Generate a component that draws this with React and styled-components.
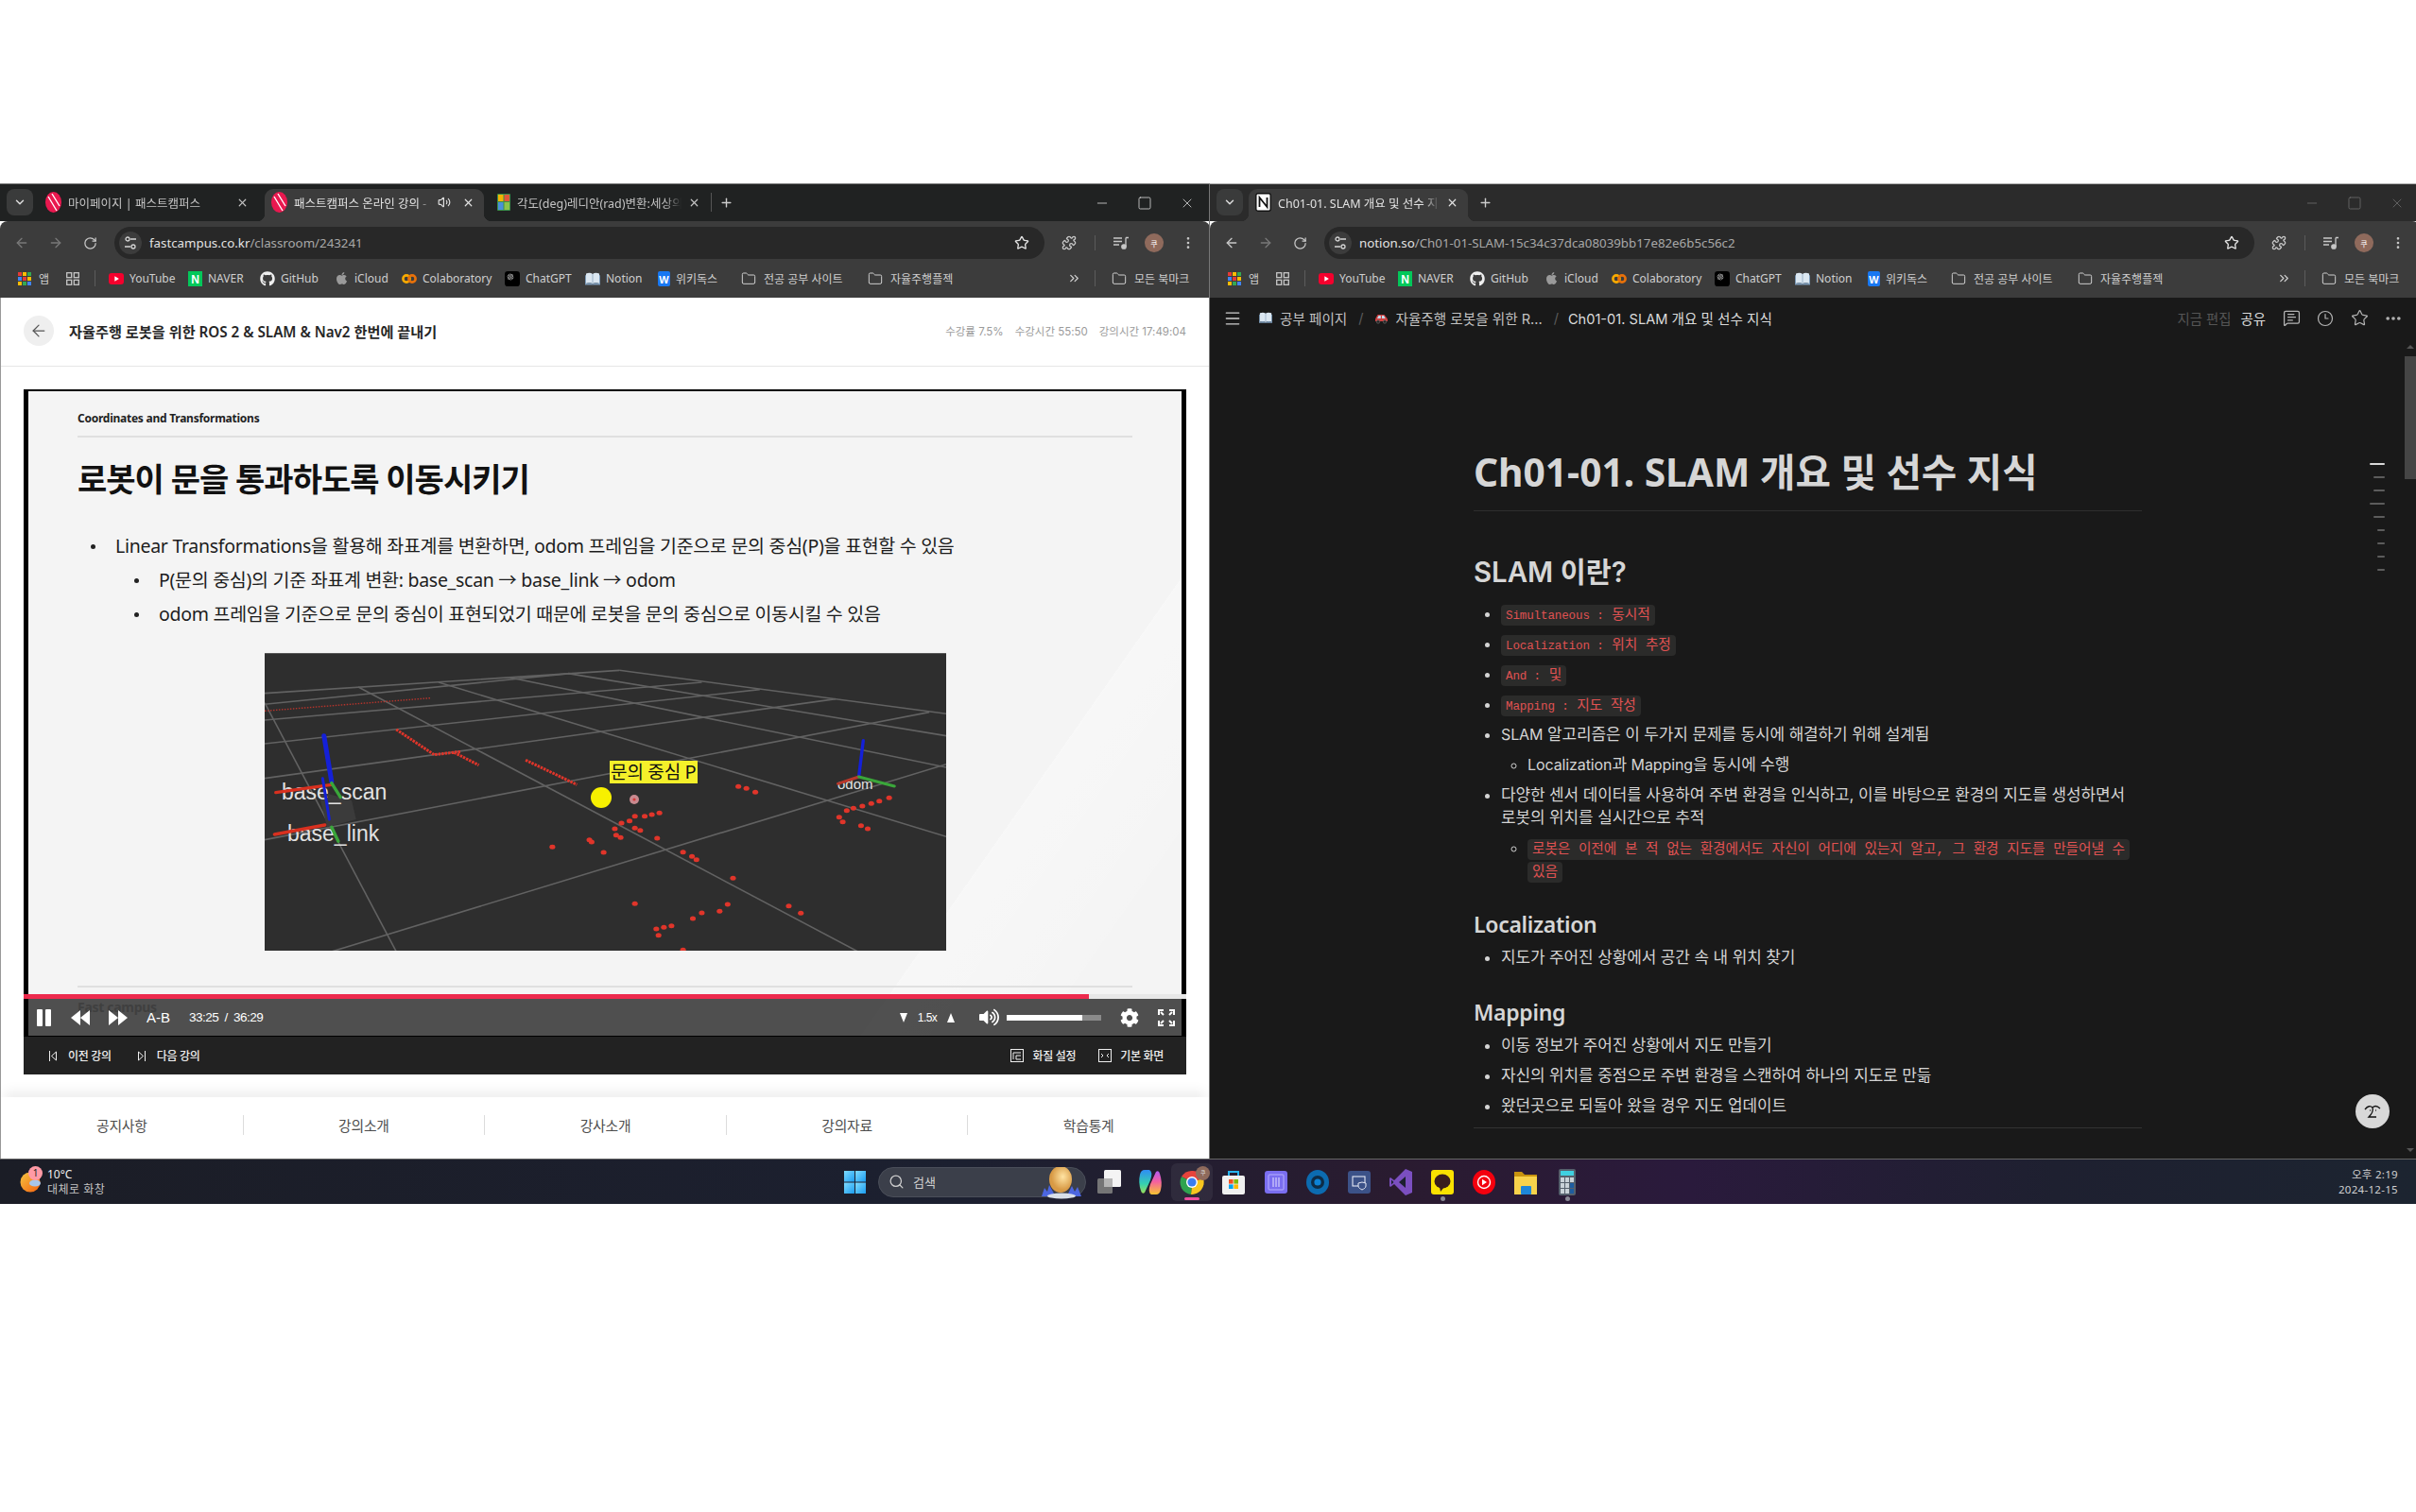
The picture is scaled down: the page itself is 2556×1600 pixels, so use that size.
import React from "react";
import styled, { createGlobalStyle } from "styled-components";
import { ArrowLeft, ArrowRight, RotateCw, Star, Puzzle, MoreVertical, ChevronDown, X, Plus, Folder, ChevronsRight, Minus, Square, Volume2, Search, MessageSquareText, Clock3, MoreHorizontal, Menu } from "lucide-react";
import { FaGithub, FaApple, FaCog, FaVolumeUp } from "react-icons/fa";
import { RiOpenaiFill } from "react-icons/ri";

const UI = `"Noto Sans", "Noto Sans CJK KR", sans-serif`;
const MONO = `"Liberation Mono", "Noto Sans CJK KR", monospace`;

const Global = createGlobalStyle`
  html, body { margin: 0; padding: 0; background: #fff; }
  body { font-family: ${UI}; }
  * { box-sizing: border-box; }
`;

const Desktop = styled.div`
  width: 2556px; height: 1600px; padding-top: 194px; overflow: hidden; background: #fff;
`;
const Windows = styled.div`
  display: grid; grid-template-columns: 1280px 1276px; height: 1032px;
`;
const Win = styled.section`
  width: ${p => p.$w}px; height: 1032px; overflow: hidden; display: flex; flex-direction: column;
  border-right: ${p => p.$divider ? "1px solid #777" : "none"};
`;
const TabStrip = styled.div`
  width: 1280px; flex: 0 0 40px; display: flex; align-items: flex-end; padding-left: 7px;
  background: ${p => p.$focused ? "#202222" : "#2b2b2b"};
  border-top: 1px solid ${p => p.$focused ? "#777" : "#aaa"};
`;
const TabSearch = styled.div`
  width: 28px; height: 28px; margin: 0 6px 6px 0; border-radius: 8px; background: #3a3b3b;
  display: flex; align-items: center; justify-content: center; color: #ddd;
`;
const Tab = styled.div`
  position: relative; width: 232px; height: 34px; margin-right: 7px; padding: 0 10px 6px 7px;
  display: flex; align-items: center; gap: 7px; border-radius: 9px 9px 0 0;
  color: ${p => p.$active ? "#e2e2e2" : "#c4c4c4"};
  background: ${p => p.$active ? "#3c3c3c" : "transparent"};
  font-size: 12.5px;
  ${p => p.$active && `
    &::before, &::after { content: ""; position: absolute; bottom: 0; width: 8px; height: 8px; }
    &::before { left: -8px; background: radial-gradient(circle at 0 0, transparent 8px, #3c3c3c 8.5px); }
    &::after { right: -8px; background: radial-gradient(circle at 100% 0, transparent 8px, #3c3c3c 8.5px); }
  `}
`;
const TabTitle = styled.span`
  flex: 1; white-space: nowrap; overflow: hidden; min-width: 0;
  mask-image: linear-gradient(90deg, #000 90%, transparent);
`;
const AudioIcon = styled(Volume2)` margin-right: 5px; flex: none; `;
const TabSep = styled.i`
  width: 1px; height: 20px; background: #555; margin: 0 0 10px -6px;
`;
const NewTab = styled.div`
  margin: 0 auto 12px ${p => p.$ml}px; color: #ccc; display: flex;
`;
const WinControls = styled.div`
  display: flex; align-items: center; gap: 29px; padding: 0 16px 0 0; height: 39px; align-self: flex-start;
  color: ${p => p.$focused ? "#ddd" : "#6f6f6f"};
  svg { width: 16px; height: 16px; }
`;
const Toolbar = styled.div`
  width: 1280px; flex: 0 0 46px; display: flex; align-items: center; padding: 0 0 0 5px;
  background: #3c3c3c; border-radius: 8px 8px 0 0; color: #c7c7c7;
`;
const NavBtn = styled.span`
  width: 36px; flex: none; display: flex; justify-content: center;
  color: ${p => p.$dim ? "#787878" : "#c7c7c7"};
`;
const Omnibox = styled.div`
  width: 984px; flex: none; height: 34px; margin-left: 8px; border-radius: 17px; background: #282828;
  display: flex; align-items: center; padding: 0 16px 0 5px; font-size: 13.3px; color: #e3e3e3;
`;
const SiteChip = styled.span`
  width: 24px; height: 24px; border-radius: 50%; background: #3c3c3c; margin-right: 8px;
  display: flex; align-items: center; justify-content: center; flex: none;
`;
const Path = styled.span` color: #a8a8a8; `;
const ToolIcons = styled.div`
  display: flex; align-items: center; margin-left: 16px; flex: none;
`;
const ToolSlot = styled.span`
  width: ${p => p.$w}px; display: flex; justify-content: center; align-items: center;
`;
const ToolSep = styled.i` width: 1px; height: 16px; background: #5a5a5a; `;
const Avatar = styled.span`
  width: 20px; height: 20px; border-radius: 50%; background: #8f6a5c; color: #fff; font-size: 8px;
  display: flex; align-items: center; justify-content: center;
`;
const BookmarkBar = styled.div`
  width: 1280px; flex: 0 0 35px; display: flex; align-items: center; padding: 0 0 6px 19px;
  background: #3c3c3c; color: #cfcfcf; font-size: 12px;
`;
const Bookmark = styled.span`
  width: ${p => p.$w}px; flex: none; display: flex; align-items: center; gap: ${p => p.$gap ?? 6}px; white-space: nowrap;
`;
const BarSep = styled.i` width: 1px; height: 17px; background: #5c5c5c; margin: ${p => p.$m}; flex: none; `;
const Spacer = styled.span` flex: 1; `;

/* fastcampus page */
const CampusPage = styled.main`
  flex: 1; min-height: 0; background: #fff; border-left: 1px solid #999; display: flex; flex-direction: column; color: #222;
`;
const CourseHead = styled.header`
  flex: 0 0 73px; display: flex; align-items: center; padding: 0 24px 2px; border-bottom: 1px solid #e6e6e6;
`;
const BackBtn = styled.span`
  width: 32px; height: 32px; border-radius: 50%; background: #efefef; color: #555;
  display: flex; align-items: center; justify-content: center; margin-right: 16px;
`;
const CourseTitle = styled.h1`
  margin: 0; font-size: 15.2px; font-weight: 600; color: #262626;
`;
const Stats = styled.div`
  margin-left: auto; display: flex; gap: 12px; font-size: 11.5px; color: #9b9b9b; font-family: Inter, "Noto Sans CJK KR", sans-serif;
`;
const Player = styled.div`
  margin: 24px 24px 0; width: 1230px; flex: none;
`;
const Video = styled.div`
  position: relative; height: 684px; overflow: hidden; background: #000;
`;
const Slide = styled.div`
  height: 100%; margin: 0 5px; border-top: 2px solid #000; padding: 20px 52px 0;
  background: linear-gradient(125deg, transparent 80%, rgba(255,255,255,.32) 80%, rgba(255,255,255,.08) 91%, transparent 91%), #f4f4f4;
  color: #111;
`;
const Eyebrow = styled.div`
  font-size: 12px; font-weight: 700; line-height: 18px; color: #222; letter-spacing: -.25px;
`;
const SlideRule = styled.hr`
  border: 0; height: 2px; background: #e0e0e0; margin: ${p => p.$m};
`;
const SlideTitle = styled.h2`
  margin: 21px 0 0; font-size: 34px; line-height: 46px; font-weight: 700; letter-spacing: -1px; color: #111;
`;
const SlideList = styled.ul`
  margin: 30px 0 0; padding: 0 0 0 ${p => p.$pad}px; list-style: none;
  font-size: 19.5px; line-height: 36px; color: #1c1c1c; letter-spacing: -.28px;
  & & { margin: 0; }
  li { position: relative; }
  li::before { content: ""; position: absolute; left: -26px; top: 16px; width: 5px; height: 5px; border-radius: 50%; background: #222; }
`;
const SlideLogo = styled.div`
  font-size: 14px; font-weight: 700; line-height: 14px; color: #c5c5c5; letter-spacing: -.3px;
`;
const RvizFrame = styled.div`
  width: 721px; height: 315px; margin: 23px auto 0; background: #2e2e2e; border-top: 1px solid #555;
  svg { display: block; }
`;
const Progress = styled.div`
  position: absolute; left: 0; right: 0; bottom: 39px; height: 5px; background: #e8e8e8;
`;
const ProgressFill = styled.div`
  height: 100%; background: #ed2a4d;
`;
const Controls = styled.div`
  position: absolute; left: 5px; right: 5px; bottom: 0; height: 39px; padding: 0 7px 0 8px;
  background: rgba(0,0,0,.68); color: #fff; display: flex; align-items: center; gap: 20px;
  font-family: "Liberation Sans", sans-serif;
`;
const AB = styled.span` font-size: 15px; `;
const TimeText = styled.span` font-size: 13.5px; letter-spacing: -.5px; word-spacing: 3px; `;
const CtlRight = styled.div`
  margin-left: auto; display: flex; align-items: center; gap: 8px;
`;
const CtlIcon = styled.span` display: flex; margin-left: ${p => p.$ml}px; `;
const Speed = styled.span` font-size: 12px; letter-spacing: -.6px; width: 24px; text-align: center; `;
const VolTrack = styled.div`
  width: 100px; height: 6px; background: #8a8a8a; margin-right: 12px;
`;
const VolFill = styled.div` height: 100%; background: #fff; `;
const LowerBar = styled.div`
  height: 41px; background: #222; border-top: 1px solid #000; display: flex; align-items: center; padding: 0 24px 0 27px;
  color: #eee; font-size: 12px; font-weight: 500;
`;
const LowerBtn = styled.span`
  display: flex; align-items: center; gap: ${p => p.$gap}px; margin-right: ${p => p.$mr}px; letter-spacing: -.3px;
`;
const ClassTabs = styled.nav`
  margin-top: 24px; flex: 1; background: #fff; display: grid; grid-template-columns: repeat(5, 1fr); align-items: center;
  box-shadow: 0 -10px 12px -4px rgba(0,0,0,.07); padding: 0 0 7px;
`;
const ClassTab = styled.span`
  height: 21px; display: flex; align-items: center; justify-content: center; font-size: 14.8px; color: #4d4d4d;
  border-left: ${p => p.$sep ? "1px solid #dcdcdc" : "none"}; letter-spacing: -.2px;
`;

/* notion */
const NotionPage = styled.main`
  position: relative; flex: 1; min-height: 0; width: 1276px; background: #191919; color: #d4d4d4; font-family: Inter, "Noto Sans CJK KR", sans-serif;
`;
const Topbar = styled.div`
  height: 43px; display: flex; align-items: center; padding: 0 11px 0 14px; font-size: 14.6px; color: #cfcfcf;
`;
const Crumb = styled.span`
  display: flex; align-items: center; gap: 8px; margin-left: ${p => p.$ml}px; white-space: nowrap;
  color: ${p => p.$bright ? "#dcdcdc" : "#c2c2c2"};
`;
const Slash = styled.span` color: #5b5b5b; margin-left: 12px; `;
const TopActions = styled.div`
  margin-left: auto; display: flex; align-items: center; gap: 10px; font-size: 14.4px; color: #555;
`;
const ShareText = styled.span` color: #dcdcdc; margin-right: 4px; `;
const TopIcon = styled.span` width: 26px; display: flex; justify-content: center; color: #b5b5b5; `;
const Doc = styled.article`
  width: 707px; margin-left: 279px; padding-top: 117px; word-break: keep-all;
`;
const DocTitle = styled.h1`
  margin: 0; padding-bottom: 17px; font-size: 40.7px; line-height: 48px; font-weight: 700; color: #d6d6d6;
  border-bottom: 1px solid #2e2e2e; font-family: "Noto Sans", "Noto Sans CJK KR", sans-serif;
`;
const H2 = styled.h2`
  margin: 46px 0 8px; font-size: 29.4px; line-height: 38px; font-weight: 600; color: #d6d6d6;
`;
const H3 = styled.h3`
  margin: ${p => p.$mt}px 0 3px; font-size: 23px; line-height: 32px; font-weight: 600; color: #d6d6d6;
  font-family: "Noto Sans", "Noto Sans CJK KR", sans-serif; letter-spacing: -.3px;
`;
const NList = styled.ul`
  padding-left: ${p => p.$pad}px; list-style: ${p => p.$sub ? "circle" : "disc"}; font-size: 16.95px; line-height: 24px; letter-spacing: -.1px;
  margin: ${p => p.$sub ? "4px 0 -4px" : "0"};
`;
const Li = styled.li` padding: 4px 0; `;
const Lat = styled.span` font-size: 16px; line-height: 1; `;
const Code = styled.code`
  font-family: ${MONO}; font-size: 14.7px; line-height: 16px; color: #e05252; background: #2b2b2a; padding: 3px 5px; border-radius: 4px;
  box-decoration-break: clone; -webkit-box-decoration-break: clone;
`;
const CodeLat = styled.span` font-size: 12.5px; line-height: 1; `;
const DocRule = styled.hr` border: 0; height: 1px; background: #333; margin: 7px 0 0; `;
const Toc = styled.div`
  position: absolute; top: 175px; right: 33px; display: flex; flex-direction: column; align-items: flex-end; gap: 12px;
`;
const TocMark = styled.i`
  display: block; height: 2px; border-radius: 1px; width: ${p => p.$w}px; background: ${p => p.$on ? "#d8d8d8" : "#5c5c5c"};
`;
const ScrollTrack = styled.div`
  position: absolute; right: 0; top: 0; bottom: 0; width: 12px;
`;
const ScrollThumb = styled.div`
  position: absolute; top: 62px; left: 0; right: 0; height: 130px; background: #454545;
`;
const ScrollArrow = styled.i`
  position: absolute; left: 2px; width: 0; height: 0; border-left: 4px solid transparent; border-right: 4px solid transparent;
  ${p => p.$up ? "top: 50px; border-bottom: 4px solid #555;" : "bottom: 7px; border-top: 4px solid #555;"}
`;
const HelpBtn = styled.div`
  position: absolute; right: 28px; bottom: 32px; width: 36px; height: 36px; border-radius: 50%; background: #d8d8d8;
  display: flex; align-items: center; justify-content: center;
`;

/* taskbar */
const Taskbar = styled.footer`
  height: 48px; border-top: 1px solid #666; display: grid; grid-template-columns: 882px auto 1fr; align-items: center;
  background: linear-gradient(90deg, #1b1d26 0%, #1c2030 40%, #2a1b30 58%, #2a1a3c 70%, #1e2030 85%, #1c2430 100%);
  color: #e8e8e8;
`;
const Weather = styled.div`
  position: relative; display: flex; align-items: center; padding-left: 21px; gap: 7px;
`;
const WeatherBadge = styled.span`
  position: absolute; left: 30px; top: -1px; width: 15px; height: 15px; border-radius: 50%; background: #ff9aa6; color: #222;
  font-size: 10px; line-height: 15px; text-align: center;
`;
const WeatherText = styled.div` font-size: 12px; line-height: 16px; color: #eee; `;
const WeatherSub = styled.div` color: #c4c4c4; letter-spacing: .5px; `;
const TrayApps = styled.div` display: flex; align-items: center; `;
const AppSlot = styled.span`
  position: relative; width: 44.1px; height: 40px; display: flex; align-items: center; justify-content: center;
  ${p => p.$active && "background: rgba(255,255,255,.06); border-radius: 6px;"}
  ${p => p.$dot && `&::after { content: ""; position: absolute; bottom: 0; left: 20px; width: 5px; height: 5px; border-radius: 50%; background: #8a8a96; }`}
`;
const ActiveBar = styled.i`
  position: absolute; left: 14px; bottom: 1px; width: 16px; height: 3px; border-radius: 2px; background: #ef4f9f;
`;
const ChromeBadge = styled.span`
  position: absolute; top: 3px; right: 3px; width: 15px; height: 15px; border-radius: 50%; background: #8f6a5c; color: #ddd; font-size: 6px; line-height: 15px; text-align: center;
`;
const SearchPill = styled.div`
  position: relative; width: 220px; height: 32px; margin: 0 2px 0 3px; border-radius: 16px; background: #3b3f4a; border: 1px solid #4a4e59;
  display: flex; align-items: center; padding-left: 10px; gap: 9px; color: #cfcfcf; font-size: 13px;
`;
const PillArt = styled.span` position: absolute; right: 3px; top: -1px; display: flex; `;
const ClockBox = styled.div`
  justify-self: end; padding-right: 19px; text-align: right; font-size: 11.5px; line-height: 16px; color: #d0d0d0; letter-spacing: .3px;
`;

/* small drawings */
const CampusIcon = () => (
  <svg width="17" height="22" viewBox="0 0 17 22"><ellipse cx="8.5" cy="11" rx="8.5" ry="11" fill="#e9184f"/><path d="M3 5l9 15M7 2l8 13" stroke="#fff" strokeWidth="1.4"/></svg>
);
const SheetIcon = () => (
  <svg width="14" height="18" viewBox="0 0 14 18"><rect width="14" height="18" rx="1" fill="#3a8f4a"/><rect x="1" y="1" width="5.5" height="7" fill="#f4b400"/><rect x="7.5" y="1" width="5.5" height="7" fill="#e2563b"/><rect x="1" y="9" width="5.5" height="8" fill="#4a90d9"/><rect x="7.5" y="9" width="5.5" height="8" fill="#8bc34a"/></svg>
);
const NotionFav = () => (
  <svg width="17" height="20" viewBox="0 0 17 20"><rect x=".8" y=".8" width="15.4" height="18.4" rx="2" fill="#fff" stroke="#111" strokeWidth="1.4"/><path d="M4.5 15V5l8 10V5" fill="none" stroke="#111" strokeWidth="1.8"/></svg>
);
const SliderChip = () => (
  <svg width="14" height="16" viewBox="0 0 14 16" fill="none" stroke="#d5d5d5" strokeWidth="1.3"><circle cx="4" cy="4" r="2"/><path d="M7 4h6M1 12h6"/><circle cx="10" cy="12" r="2"/></svg>
);
const AppsGrid = () => {
  const c = ["#e53935","#fbbc04","#34a853","#4285f4","#e53935","#fbbc04","#fbbc04","#34a853","#4285f4"];
  return <svg width="14" height="14" viewBox="0 0 14 14">{c.map((f, i) => <rect key={i} x={(i % 3) * 5} y={Math.floor(i / 3) * 5} width="4" height="4" fill={f}/>)}</svg>;
};
const QuadGrid = () => (
  <svg width="14" height="14" viewBox="0 0 14 14" fill="none" stroke="#c7c7c7" strokeWidth="1.3"><rect x=".7" y=".7" width="5" height="5"/><rect x="8.3" y=".7" width="5" height="5"/><rect x=".7" y="8.3" width="5" height="5"/><rect x="8.3" y="8.3" width="5" height="5"/></svg>
);
const YouTubeIcon = () => (
  <svg width="16" height="16" viewBox="0 0 16 16"><rect y="2" width="16" height="12" rx="3" fill="#f5002d"/><path d="M6.3 5.2l4.6 2.8-4.6 2.8z" fill="#fff"/></svg>
);
const NaverIcon = () => (
  <svg width="15" height="16" viewBox="0 0 15 16"><rect width="15" height="16" fill="#03c75a"/><text x="7.5" y="12.5" textAnchor="middle" fontFamily="Liberation Sans" fontWeight="700" fontSize="12" fill="#fff">N</text></svg>
);
const ColabIcon = () => (
  <svg width="16" height="16" viewBox="0 0 16 16" fill="none" strokeWidth="2.6"><circle cx="5" cy="8" r="3.6" stroke="#f9ab00"/><circle cx="11" cy="8" r="3.6" stroke="#e8710a"/></svg>
);
const GptIcon = () => (
  <svg width="16" height="16" viewBox="0 0 24 24"><rect width="24" height="24" rx="5" fill="#000"/><RiOpenaiFill x="3" y="3" width="18" height="18" color="#ddd"/></svg>
);
const BookIcon = ({ s = 16 }) => (
  <svg width={s} height={s * 0.875} viewBox="0 0 16 14"><path d="M1 1.5c3-1 5-1 7 .5 2-1.5 4-1.5 7-.5V12c-3-1-5-1-7 .5C6 11 4 11 1 12z" fill="#dbe7f1"/><path d="M1 3v9c3-1 5-1 7 .5 2-1.5 4-1.5 7-.5V3l1 .5V13.5H0V3.5z" fill="#7c9ab8"/><path d="M8 2v10" stroke="#9bb2c8"/></svg>
);
const WikiIcon = () => (
  <svg width="13" height="16" viewBox="0 0 13 16"><rect width="13" height="16" rx="2" fill="#1877f2"/><text x="6.5" y="12.5" textAnchor="middle" fontFamily="Liberation Sans" fontWeight="700" fontSize="11" fill="#fff">W</text></svg>
);
const CarIcon = () => (
  <svg width="15" height="12" viewBox="0 0 15 12"><path d="M1 9V6.5L3.5 2h7L14 6.5V9z" fill="#cf3f3f"/><path d="M4.5 3h2.3v3H3zM8 3h2l1.7 3H8z" fill="#bfdff0"/><circle cx="4" cy="9.5" r="1.7" fill="#222" stroke="#777" strokeWidth=".6"/><circle cx="11" cy="9.5" r="1.7" fill="#222" stroke="#777" strokeWidth=".6"/></svg>
);
const PauseIcon = () => <svg width="17" height="18" viewBox="0 0 17 18" fill="#fff"><rect x="1" width="6" height="18" rx="1"/><rect x="10" width="6" height="18" rx="1"/></svg>;
const SeekIcon = ({ forward }) => (
  <svg width="20" height="16" viewBox="0 0 20 16" fill="#fff"><path d={forward ? "M0 0v16L10 8zM10 0v16L20 8z" : "M10 0v16L0 8zM20 0v16L10 8z"}/></svg>
);
const Tri = ({ up }) => <svg width="10" height="12" viewBox="0 0 10 12" fill="#fff"><path d={up ? "M5 1l4 10H1z" : "M5 11L1 1h8z"}/></svg>;
const FullIcon = () => (
  <svg width="18" height="18" viewBox="0 0 18 18" fill="none" stroke="#fff" strokeWidth="2"><path d="M1 6V1h5M12 1h5v5M17 12v5h-5M6 17H1v-5M3 3l3 3M15 3l-3 3M15 15l-3-3M3 15l3-3"/></svg>
);
const PrevIcon = ({ next }) => (
  <svg width="8" height="11" viewBox="0 0 8 11" fill="none" stroke="#eee" strokeWidth="1"><path d={next ? "M.5 1l5 4.5-5 4.5zM7.5 0v11" : "M7.5 1l-5 4.5 5 4.5zM.5 0v11"}/></svg>
);
const QualityIcon = () => (
  <svg width="14" height="14" viewBox="0 0 14 14" fill="none" stroke="#eee" strokeWidth="1"><rect x=".5" y=".5" width="13" height="13"/><path d="M3 4h8M3 4v7M6 7h5M6 7v4h5"/></svg>
);
const WideIcon = () => (
  <svg width="14" height="14" viewBox="0 0 14 14" fill="none" stroke="#eee" strokeWidth="1"><rect x=".5" y=".5" width="13" height="13"/><path d="M3 5l2 2-2 2M11 5L9 7l2 2"/></svg>
);
const HelpGlyph = () => (
  <svg width="22" height="22" viewBox="0 0 22 22" fill="none" stroke="#111" strokeWidth="1.3"><path d="M3 9c3-4 6-4 8-2 2-2 5-2 8 1M11 7c1 3-1 7-4 10h8M8 10h.8M14 10h.8"/></svg>
);
const WinLogo = () => (
  <svg width="23" height="24" viewBox="0 0 23 24"><defs><linearGradient id="wl" x1="0" y1="0" x2="1" y2="1"><stop offset="0" stopColor="#7fdcff"/><stop offset="1" stopColor="#1a9cf0"/></linearGradient></defs><rect width="11" height="11.5" fill="url(#wl)"/><rect x="12" width="11" height="11.5" fill="url(#wl)"/><rect y="12.5" width="11" height="11.5" fill="url(#wl)"/><rect x="12" y="12.5" width="11" height="11.5" fill="url(#wl)"/></svg>
);
const MoonArt = () => (
  <svg width="44" height="34" viewBox="0 0 44 34"><defs><radialGradient id="mn" cx=".6" cy=".4"><stop offset="0" stopColor="#ffe4a3"/><stop offset="1" stopColor="#d89a45"/></radialGradient></defs><ellipse cx="21" cy="13" rx="12" ry="14" fill="url(#mn)"/><path d="M1 31l3-9 3 4 2-7 5 9h15l4-8 3 6 3-5 4 10z" fill="#4c66e0"/><ellipse cx="22" cy="30.5" rx="15" ry="3" fill="#d9dfe8"/></svg>
);
const TaskViewIcon = () => (
  <svg width="25" height="25" viewBox="0 0 25 25"><rect x="7" y="0" width="18" height="18" rx="1.5" fill="#f4f4f4"/><rect x="0" y="9" width="16" height="16" rx="1.5" fill="#7a7a7a" opacity=".95"/><rect x="7" y="9" width="9" height="9" fill="#b5b5b5"/></svg>
);
const CopilotIcon = () => (
  <svg width="26" height="28" viewBox="0 0 26 28"><defs><linearGradient id="cpa" x1="0" y1="0" x2="0" y2="1"><stop offset="0" stopColor="#2f8df5"/><stop offset=".6" stopColor="#35d0b0"/><stop offset="1" stopColor="#9adf5a"/></linearGradient><linearGradient id="cpb" x1="0" y1="0" x2="0" y2="1"><stop offset="0" stopColor="#f8c531"/><stop offset=".55" stopColor="#f4609f"/><stop offset="1" stopColor="#b45af0"/></linearGradient></defs><path d="M12 1H7Q3 1 2 6Q0 14 3 23Q4 27 7 25L13 12Q16 3 12 1z" fill="url(#cpa)"/><path d="M12 1H7Q3 1 2 6Q0 14 3 23Q4 27 7 25L13 12Q16 3 12 1z" fill="url(#cpb)" transform="rotate(180 13 14)"/></svg>
);
const ChromeIcon = () => (
  <svg width="26" height="26" viewBox="0 0 26 26"><path d="M13 13L2 7A13 13 0 0 1 25 9z" fill="#e7433c"/><path d="M13 13L25 9A13 13 0 0 1 12 26z" fill="#f8c61f"/><path d="M13 13L12 26A13 13 0 0 1 2 7z" fill="#2fa34f"/><circle cx="13" cy="13" r="6" fill="#fff"/><circle cx="13" cy="13" r="4.6" fill="#3a7df0"/></svg>
);
const StoreIcon = () => (
  <svg width="24" height="26" viewBox="0 0 24 26"><path d="M7 6V2h10v4" fill="none" stroke="#27b4ef" strokeWidth="2"/><rect y="6" width="24" height="20" rx="2" fill="#f0f0f0"/><rect x="7" y="10" width="4.6" height="4.6" fill="#f25022"/><rect x="12.4" y="10" width="4.6" height="4.6" fill="#7fba00"/><rect x="7" y="15.4" width="4.6" height="4.6" fill="#00a4ef"/><rect x="12.4" y="15.4" width="4.6" height="4.6" fill="#ffb900"/></svg>
);
const PurpleIcon = () => (
  <svg width="24" height="24" viewBox="0 0 24 24"><rect width="24" height="24" rx="3" fill="#7a6ef0"/><rect x="4" y="4" width="16" height="16" rx="1" fill="none" stroke="#b7b0ff"/><path d="M9 7v10M12 7v10M15 7v10" stroke="#e6e3ff" strokeWidth="1"/></svg>
);
const RingIcon = () => (
  <svg width="24" height="26" viewBox="0 0 24 26"><ellipse cx="12" cy="13" rx="12" ry="13" fill="#0c6bb0"/><circle cx="12" cy="13" r="7" fill="#0d2c47"/><circle cx="12" cy="13" r="3.6" fill="#0c82d6"/></svg>
);
const SecureIcon = () => (
  <svg width="24" height="24" viewBox="0 0 24 24"><rect width="24" height="24" rx="3" fill="#3c5288"/><rect x="5" y="6" width="13" height="10" fill="none" stroke="#e4e8f4" strokeWidth="1.1"/><path d="M15 12l4 1v3c0 2-2 3-4 4-2-1-4-2-4-4v-3z" fill="#3c5288" stroke="#e4e8f4"/></svg>
);
const VsIcon = () => (
  <svg width="24" height="28" viewBox="0 0 24 28"><path d="M17 0l7 3v22l-7 3L5 16 1 19l-1-1V10l1-1 4 3z" fill="#7b4fc0"/><path d="M17 8l-7 6 7 6z" fill="#1c2030"/><path d="M2 11.5L4.5 14 2 16.5z" fill="#1c2030"/></svg>
);
const KakaoIcon = () => (
  <svg width="24" height="26" viewBox="0 0 24 26"><rect width="24" height="26" rx="3" fill="#fae100"/><ellipse cx="12" cy="12" rx="8.5" ry="7.5" fill="#3a1d1d"/><path d="M9 18l1 5 4-5z" fill="#3a1d1d"/></svg>
);
const YtmIcon = () => (
  <svg width="24" height="26" viewBox="0 0 24 26"><ellipse cx="12" cy="13" rx="12" ry="13" fill="#f4000e"/><circle cx="12" cy="13" r="6.5" fill="none" stroke="#fff" strokeWidth="1.4"/><path d="M10 9.8l5 3.2-5 3.2z" fill="#fff"/></svg>
);
const FolderIcon = () => (
  <svg width="24" height="26" viewBox="0 0 24 26"><path d="M0 2h8l3 3h13v21H0z" fill="#c8930f"/><rect y="7" width="24" height="19" fill="#f8d24b"/><rect x="7" y="17" width="11" height="9" rx="1" fill="#1e86d8"/></svg>
);
const CalcIcon = () => (
  <svg width="18" height="28" viewBox="0 0 18 28"><rect width="18" height="28" rx="2" fill="#55606c"/><rect x="2" y="2" width="14" height="5" fill="#3fd0e0"/>{[0,1,2].map(r => [0,1,2].map(c => <rect key={`${r}${c}`} x={2 + c * 5} y={9 + r * 6} width="4" height="5" fill={c === 2 && r > 0 ? "#1e5da0" : "#c9d2d8"}/>))}</svg>
);

/* rviz drawing: coordinates measured on the reference, x*0.4719 / y*0.3333 */
const gridLines = [
  [20,160,815,87],[20,195,705,97],[20,245,1000,125],[20,320,1130,148],[20,430,1300,178],[20,625,1510,220],[170,980,1548,385],
  [20,190,315,980],[230,140,1350,980],[410,125,1548,615],[570,110,1548,395],[700,97,1548,295],[815,87,1548,225],
];
const scanPts = [[905,540],[888,545],[872,550],[850,550],[838,565],[820,572],[805,590],[850,588],[862,595],[808,610],[818,618],[900,620],[748,625],[753,632],[780,665],[665,648],[958,664],[978,678],[988,688],[1070,747],[850,828],[1195,835],[1222,858],[1000,857],[980,875],[1058,830],[1040,852],[932,898],[915,903],[898,908],[903,928],[958,975],[1082,456],[1100,462],[1120,474],[1420,492],[1398,502],[1380,510],[1360,518],[1340,525],[1325,532],[1308,553],[1316,568],[1357,580],[1372,590]];
const RvizScene = () => (
  <svg width="721" height="314" viewBox="0 0 721 314">
    <g transform="translate(-9.44,-11.67) scale(0.4719,0.3333)">
      {gridLines.map((l, i) => <line key={i} x1={l[0]} y1={l[1]} x2={l[2]} y2={l[3]} stroke="#626262" strokeWidth="1.6" vectorEffect="non-scaling-stroke"/>)}
      <path d="M20 216L392 175" stroke="#b5342c" strokeWidth="1.4" strokeDasharray="1.5 1.5" vectorEffect="non-scaling-stroke" fill="none"/>
      <path d="M315 275L400 355L460 345M445 348L500 388M605 372L720 450" stroke="#e0352a" strokeWidth="3" strokeDasharray="2.5 1" vectorEffect="non-scaling-stroke" fill="none"/>
      {scanPts.map((p, i) => <ellipse key={i} cx={p[0]} cy={p[1]} rx="6.5" ry="7.5" fill="#e0352a"/>)}
      <path d="M140 470L215 500L225 560L160 585z" fill="#3b3b3b"/>
    </g>
    <text x="18" y="154" fontFamily="Liberation Sans" fontSize="23" fill="#e2e2e2">base_scan</text>
    <text x="24" y="198" fontFamily="Liberation Sans" fontSize="23" fill="#e2e2e2">base_link</text>
    <text x="606" y="143" fontFamily="Liberation Sans" fontSize="15" fill="#e2e2e2">odom</text>
    <g transform="translate(-9.44,-11.67) scale(0.4719,0.3333)" fill="none" strokeLinecap="round">
      <path d="M153 295L170 440" stroke="#1420d8" strokeWidth="5" vectorEffect="non-scaling-stroke"/>
      <path d="M45 475L170 450" stroke="#d8301f" strokeWidth="3.4" vectorEffect="non-scaling-stroke"/>
      <path d="M170 445L190 490" stroke="#3aa63a" strokeWidth="3.4" vectorEffect="non-scaling-stroke"/>
      <path d="M150 430L165 560" stroke="#1420d8" strokeWidth="3" vectorEffect="non-scaling-stroke"/>
      <path d="M42 608L155 578" stroke="#d8301f" strokeWidth="3.4" vectorEffect="non-scaling-stroke"/>
      <path d="M170 585L185 630" stroke="#3aa63a" strokeWidth="3.4" vectorEffect="non-scaling-stroke"/>
      <path d="M1362 310L1352 425" stroke="#1420d8" strokeWidth="3.4" vectorEffect="non-scaling-stroke"/>
      <path d="M1305 447L1352 425" stroke="#b9372a" strokeWidth="3" vectorEffect="non-scaling-stroke"/>
      <path d="M1352 425L1432 455" stroke="#3aa63a" strokeWidth="3" vectorEffect="non-scaling-stroke"/>
    </g>
    <rect x="365" y="113" width="93" height="24" fill="#f5f02a"/>
    <text x="366" y="132" fontFamily="Noto Sans CJK KR" fontSize="19" fill="#111">문의 중심 P</text>
    <circle cx="356" cy="152" r="11" fill="#f7f000"/>
    <circle cx="391" cy="154" r="5" fill="#c98a90"/>
    <circle cx="391" cy="154" r="1.6" fill="#d43a3a"/>
  </svg>
);

const bookmarks = [
  [84, <YouTubeIcon/>, "YouTube"], [76, <NaverIcon/>, "NAVER"], [79, <FaGithub size={16} color="#eee"/>, "GitHub"],
  [71, <FaApple size={15} color="#9a9a9a"/>, "iCloud"], [109, <ColabIcon/>, "Colaboratory"], [85, <GptIcon/>, "ChatGPT"],
  [77, <BookIcon/>, "Notion"], [88, <WikiIcon/>, "위키독스"], [134, <Folder size={16} strokeWidth={1.5}/>, "전공 공부 사이트"],
  [211, <Folder size={16} strokeWidth={1.5}/>, "자율주행플젝"],
];

const MusicQueue = () => (
  <svg width="16" height="14" viewBox="0 0 16 14" fill="none" stroke="#c7c7c7" strokeWidth="1.3"><path d="M0 2h9M0 5.5h9M0 9h6"/><path d="M13 1.5h3M13 1.5V11" /><circle cx="11" cy="11" r="2.2" fill="#c7c7c7"/></svg>
);

const Chrome = ({ focused, tabs, newTabAfterSep, url, path, w, divider, backDim, children }) => (
  <Win $w={w} $divider={divider}>
    <TabStrip $focused={focused}>
      <TabSearch><ChevronDown size={14} strokeWidth={2.5}/></TabSearch>
      {tabs.map((t, i) => (
        <Tab key={i} $active={t.active}>
          {t.icon}
          <TabTitle>{t.title}</TabTitle>
          {t.audio && <AudioIcon size={14}/>}
          <X size={13} strokeWidth={2.2}/>
        </Tab>
      ))}
      {newTabAfterSep && <TabSep/>}
      <NewTab $ml={newTabAfterSep ? 8 : 4}><Plus size={15} strokeWidth={2.2}/></NewTab>
      <WinControls $focused={focused}>
        <Minus strokeWidth={1.2}/>
        <Square strokeWidth={1.2}/>
        <X strokeWidth={1.2}/>
      </WinControls>
    </TabStrip>
    <Toolbar>
      <NavBtn $dim={backDim}><ArrowLeft size={16}/></NavBtn>
      <NavBtn $dim><ArrowRight size={16}/></NavBtn>
      <NavBtn><RotateCw size={15}/></NavBtn>
      <Omnibox>
        <SiteChip><SliderChip/></SiteChip>
        {url}<Path>{path}</Path>
        <Spacer/>
        <Star size={16}/>
      </Omnibox>
      <ToolIcons>
        <ToolSlot $w={20}><Puzzle size={16}/></ToolSlot>
        <ToolSlot $w={34}><ToolSep/></ToolSlot>
        <ToolSlot $w={22}><MusicQueue/></ToolSlot>
        <ToolSlot $w={48}><Avatar>쿠</Avatar></ToolSlot>
        <ToolSlot $w={24}><MoreVertical size={16}/></ToolSlot>
      </ToolIcons>
    </Toolbar>
    <BookmarkBar>
      <Bookmark $w={51} $gap={8}><AppsGrid/>앱</Bookmark>
      <Bookmark $w={30}><QuadGrid/></Bookmark>
      <BarSep $m="0 14px 0 0"/>
      {bookmarks.map((b, i) => <Bookmark key={i} $w={b[0]} $gap={i === 8 || i === 9 ? 8 : 6}>{b[1]}{b[2]}</Bookmark>)}
      <Bookmark $w={29}><ChevronsRight size={15}/></Bookmark>
      <BarSep $m="0 17px 0 0"/>
      <Bookmark $w={100} $gap={8}><Folder size={16} strokeWidth={1.5}/>모든 북마크</Bookmark>
    </BookmarkBar>
    {children}
  </Win>
);

export default function App() {
  const progressPct = 91.6;
  const volumePct = 80;
  return (
    <Desktop>
      <Global/>
      <Windows>
        <Chrome focused w={1280} divider backDim newTabAfterSep
          url="fastcampus.co.kr" path="/classroom/243241"
          tabs={[
            { icon: <CampusIcon/>, title: "마이페이지 | 패스트캠퍼스" },
            { icon: <CampusIcon/>, title: "패스트캠퍼스 온라인 강의 - 동영상", audio: true, active: true },
            { icon: <SheetIcon/>, title: "각도(deg)레디안(rad)변환:세상의 모든 계산기" },
          ]}>
          <CampusPage>
            <CourseHead>
              <BackBtn><ArrowLeft size={20} strokeWidth={1.5}/></BackBtn>
              <CourseTitle>자율주행 로봇을 위한 ROS 2 &amp; SLAM &amp; Nav2 한번에 끝내기</CourseTitle>
              <Stats><span>수강률 7.5%</span><span>수강시간 55:50</span><span>강의시간 17:49:04</span></Stats>
            </CourseHead>
            <Player>
              <Video>
                <Slide>
                  <Eyebrow>Coordinates and Transformations</Eyebrow>
                  <SlideRule $m="9px 0 0"/>
                  <SlideTitle>로봇이 문을 통과하도록 이동시키기</SlideTitle>
                  <SlideList $pad={40}>
                    <li>Linear Transformations을 활용해 좌표계를 변환하면, odom 프레임을 기준으로 문의 중심(P)을 표현할 수 있음
                      <SlideList $pad={46}>
                        <li>P(문의 중심)의 기준 좌표계 변환: base_scan → base_link → odom</li>
                        <li>odom 프레임을 기준으로 문의 중심이 표현되었기 때문에 로봇을 문의 중심으로 이동시킬 수 있음</li>
                      </SlideList>
                    </li>
                  </SlideList>
                  <RvizFrame><RvizScene/></RvizFrame>
                  <SlideRule $m="37px 0 14px"/>
                  <SlideLogo>Fast campus</SlideLogo>
                </Slide>
                <Progress><ProgressFill style={{ width: `${progressPct}%` }}/></Progress>
                <Controls>
                  <PauseIcon/>
                  <SeekIcon/>
                  <SeekIcon forward/>
                  <AB>A-B</AB>
                  <TimeText>33:25 / 36:29</TimeText>
                  <CtlRight>
                    <Tri/>
                    <Speed>1.5x</Speed>
                    <Tri up/>
                    <CtlIcon $ml={17}><FaVolumeUp size={21} color="#fff"/></CtlIcon>
                    <VolTrack><VolFill style={{ width: `${volumePct}%` }}/></VolTrack>
                    <FaCog size={20} color="#fff"/>
                    <CtlIcon $ml={12}><FullIcon/></CtlIcon>
                  </CtlRight>
                </Controls>
              </Video>
              <LowerBar>
                <LowerBtn $gap={12} $mr={28}><PrevIcon/>이전 강의</LowerBtn>
                <LowerBtn $gap={12} $mr={0}><PrevIcon next/>다음 강의</LowerBtn>
                <Spacer/>
                <LowerBtn $gap={9} $mr={24}><QualityIcon/>화질 설정</LowerBtn>
                <LowerBtn $gap={9} $mr={0}><WideIcon/>기본 화면</LowerBtn>
              </LowerBar>
            </Player>
            <ClassTabs>
              <ClassTab>공지사항</ClassTab>
              <ClassTab $sep>강의소개</ClassTab>
              <ClassTab $sep>강사소개</ClassTab>
              <ClassTab $sep>강의자료</ClassTab>
              <ClassTab $sep>학습통계</ClassTab>
            </ClassTabs>
          </CampusPage>
        </Chrome>

        <Chrome w={1276} url="notion.so" path="/Ch01-01-SLAM-15c34c37dca08039bb17e82e6b5c56c2"
          tabs={[{ icon: <NotionFav/>, title: "Ch01-01. SLAM 개요 및 선수 지식 | Notion", active: true }]}>
          <NotionPage>
            <Topbar>
              <Menu size={20} strokeWidth={1.6} color="#cfcfcf"/>
              <Crumb $ml={18}><BookIcon s={14}/>공부 페이지</Crumb>
              <Slash>/</Slash>
              <Crumb $ml={11}><CarIcon/>자율주행 로봇을 위한 R...</Crumb>
              <Slash>/</Slash>
              <Crumb $ml={10} $bright>Ch01-01. SLAM 개요 및 선수 지식</Crumb>
              <TopActions>
                <span>지금 편집</span>
                <ShareText>공유</ShareText>
                <TopIcon><MessageSquareText size={19} strokeWidth={1.6}/></TopIcon>
                <TopIcon><Clock3 size={18} strokeWidth={1.6}/></TopIcon>
                <TopIcon><Star size={19} strokeWidth={1.5}/></TopIcon>
                <TopIcon><MoreHorizontal size={20} strokeWidth={2.4}/></TopIcon>
              </TopActions>
            </Topbar>
            <Doc>
              <DocTitle>Ch01-01. SLAM 개요 및 선수 지식</DocTitle>
              <H2>SLAM 이란?</H2>
              <NList $pad={29}>
                <Li><Code><CodeLat>Simultaneous :</CodeLat> 동시적</Code></Li>
                <Li><Code><CodeLat>Localization :</CodeLat> 위치 추정</Code></Li>
                <Li><Code><CodeLat>And :</CodeLat> 및</Code></Li>
                <Li><Code><CodeLat>Mapping :</CodeLat> 지도 작성</Code></Li>
                <Li><Lat>SLAM</Lat> 알고리즘은 이 두가지 문제를 동시에 해결하기 위해 설계됨
                  <NList $sub $pad={28}>
                    <Li><Lat>Localization</Lat>과 <Lat>Mapping</Lat>을 동시에 수행</Li>
                  </NList>
                </Li>
                <Li>다양한 센서 데이터를 사용하여 주변 환경을 인식하고, 이를 바탕으로 환경의 지도를 생성하면서 로봇의 위치를 실시간으로 추적
                  <NList $sub $pad={28}>
                    <Li><Code>로봇은 이전에 본 적 없는 환경에서도 자신이 어디에 있는지 알고, 그 환경 지도를 만들어낼 수 있음</Code></Li>
                  </NList>
                </Li>
              </NList>
              <H3 $mt={25}>Localization</H3>
              <NList $pad={29}>
                <Li>지도가 주어진 상황에서 공간 속 내 위치 찾기</Li>
              </NList>
              <H3 $mt={26}>Mapping</H3>
              <NList $pad={29}>
                <Li>이동 정보가 주어진 상황에서 지도 만들기</Li>
                <Li>자신의 위치를 중점으로 주변 환경을 스캔하여 하나의 지도로 만듦</Li>
                <Li>왔던곳으로 되돌아 왔을 경우 지도 업데이트</Li>
              </NList>
              <DocRule/>
            </Doc>
            <Toc>
              {[16,12,12,16,12,8,8,8,8].map((v, i) => <TocMark key={i} $w={v} $on={i === 0}/>)}
            </Toc>
            <HelpBtn><HelpGlyph/></HelpBtn>
            <ScrollTrack><ScrollArrow $up/><ScrollThumb/><ScrollArrow/></ScrollTrack>
          </NotionPage>
        </Chrome>
      </Windows>

      <Taskbar>
        <Weather>
          <svg width="22" height="24" viewBox="0 0 22 24"><defs><linearGradient id="sun" x1="0" y1="0" x2="1" y2="1"><stop offset="0" stopColor="#f5c542"/><stop offset="1" stopColor="#f4610f"/></linearGradient></defs><circle cx="11" cy="12" r="10.5" fill="url(#sun)"/><ellipse cx="16" cy="13" rx="6" ry="3.6" fill="#a8c6ea"/></svg>
          <WeatherBadge>1</WeatherBadge>
          <WeatherText>10°C<WeatherSub>대체로 화창</WeatherSub></WeatherText>
        </Weather>
        <TrayApps>
          <AppSlot><WinLogo/></AppSlot>
          <SearchPill>
            <Search size={17} strokeWidth={1.8}/>
            검색
            <PillArt><MoonArt/></PillArt>
          </SearchPill>
          <AppSlot><TaskViewIcon/></AppSlot>
          <AppSlot><CopilotIcon/></AppSlot>
          <AppSlot $active><ChromeIcon/><ChromeBadge>쿠</ChromeBadge><ActiveBar/></AppSlot>
          <AppSlot><StoreIcon/></AppSlot>
          <AppSlot><PurpleIcon/></AppSlot>
          <AppSlot><RingIcon/></AppSlot>
          <AppSlot><SecureIcon/></AppSlot>
          <AppSlot><VsIcon/></AppSlot>
          <AppSlot $dot><KakaoIcon/></AppSlot>
          <AppSlot><YtmIcon/></AppSlot>
          <AppSlot><FolderIcon/></AppSlot>
          <AppSlot $dot><CalcIcon/></AppSlot>
        </TrayApps>
        <ClockBox>오후 2:19<br/>2024-12-15</ClockBox>
      </Taskbar>
    </Desktop>
  );
}
